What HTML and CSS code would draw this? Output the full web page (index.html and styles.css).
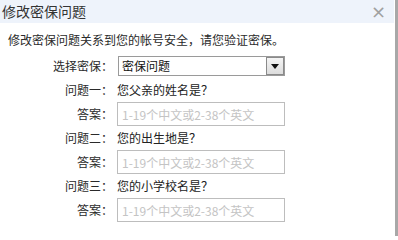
FILE: index.html
```html
<!DOCTYPE html>
<html lang="zh-CN">
<head>
<meta charset="utf-8">
<title>修改密保问题</title>
<link rel="stylesheet" href="styles.css">
</head>
<body>
<div class="frame">
  <div class="dialog">
    <div class="header">
      <span class="title">修改密保问题</span>
      <span class="close">×</span>
    </div>
    <p class="intro">修改密保问题关系到您的帐号安全，请您验证密保。</p>
    <div class="form">
      <label class="label">选择密保：</label>
      <div class="value">
        <div class="select">
          <span class="select-text">密保问题</span>
          <span class="select-btn"><svg width="8" height="5" viewBox="0 0 8 5"><path d="M0 0H8L4 5Z" fill="#111"/></svg></span>
        </div>
      </div>

      <label class="label">问题一：</label>
      <div class="value">您父亲的姓名是？</div>
      <label class="label">答案：</label>
      <div class="value"><input class="answer" type="text" placeholder="1-19个中文或2-38个英文"></div>

      <label class="label">问题二：</label>
      <div class="value">您的出生地是？</div>
      <label class="label">答案：</label>
      <div class="value"><input class="answer" type="text" placeholder="1-19个中文或2-38个英文"></div>

      <label class="label">问题三：</label>
      <div class="value">您的小学校名是？</div>
      <label class="label">答案：</label>
      <div class="value"><input class="answer" type="text" placeholder="1-19个中文或2-38个英文"></div>
    </div>
  </div>
  <div class="edge"></div>
</div>
</body>
</html>
```

FILE: styles.css
```css
html, body {
  margin: 0;
  padding: 0;
  background: #ffffff;
}

body {
  font-family: "Noto Sans CJK SC", "Noto Sans", sans-serif;
  font-size: 12px;
  color: #333333;
}

.frame {
  display: flex;
  width: 398px;
  height: 236px;
}

.dialog {
  width: 395px;
  display: flex;
  flex-direction: column;
}

.edge {
  width: 3px;
  background: #a8a8a8;
}

.header {
  height: 23px;
  background: #eef3fb;
  display: flex;
  align-items: center;
  justify-content: space-between;
  padding: 0 8px 0 2px;
  margin-right: 1px;
}

.title {
  font-size: 14px;
  color: #333333;
  line-height: 23px;
}

.close {
  font-family: "DejaVu Sans", sans-serif;
  font-size: 18px;
  color: #a0a0a0;
  line-height: 23px;
}

.intro {
  margin: 5px 0 2px 0;
  padding-left: 8px;
  line-height: 24px;
  color: #2a2a2a;
}

.form {
  display: grid;
  grid-template-columns: 113px 168px;
  column-gap: 4px;
  grid-auto-rows: 24px;
}

.label {
  text-align: right;
  line-height: 24px;
  color: #2a2a2a;
}

.value {
  display: flex;
  align-items: center;
  line-height: 24px;
  color: #222222;
}

.select {
  box-sizing: border-box;
  width: 168px;
  height: 20px;
  margin-left: 1px;
  border: 1px solid #9a9a9a;
  display: flex;
  align-items: center;
  justify-content: space-between;
  background: #ffffff;
}

.select-text {
  padding-left: 3px;
  color: #111111;
  font-size: 12px;
}

.select-btn {
  box-sizing: border-box;
  width: 18px;
  height: 18px;
  border: 1px solid #8a8a8a;
  background: linear-gradient(#f4f4f4, #dcdcdc);
  display: flex;
  align-items: center;
  justify-content: center;
}

.answer {
  box-sizing: border-box;
  width: 168px;
  height: 24px;
  margin: 0;
  border: 1px solid #bdbdbd;
  padding: 0 4px;
  font-family: "Noto Sans CJK SC", "Noto Sans", sans-serif;
  font-size: 12px;
  color: #333333;
  background: #ffffff;
  outline: none;
}

.answer::placeholder {
  color: #c4c4c4;
}
```
